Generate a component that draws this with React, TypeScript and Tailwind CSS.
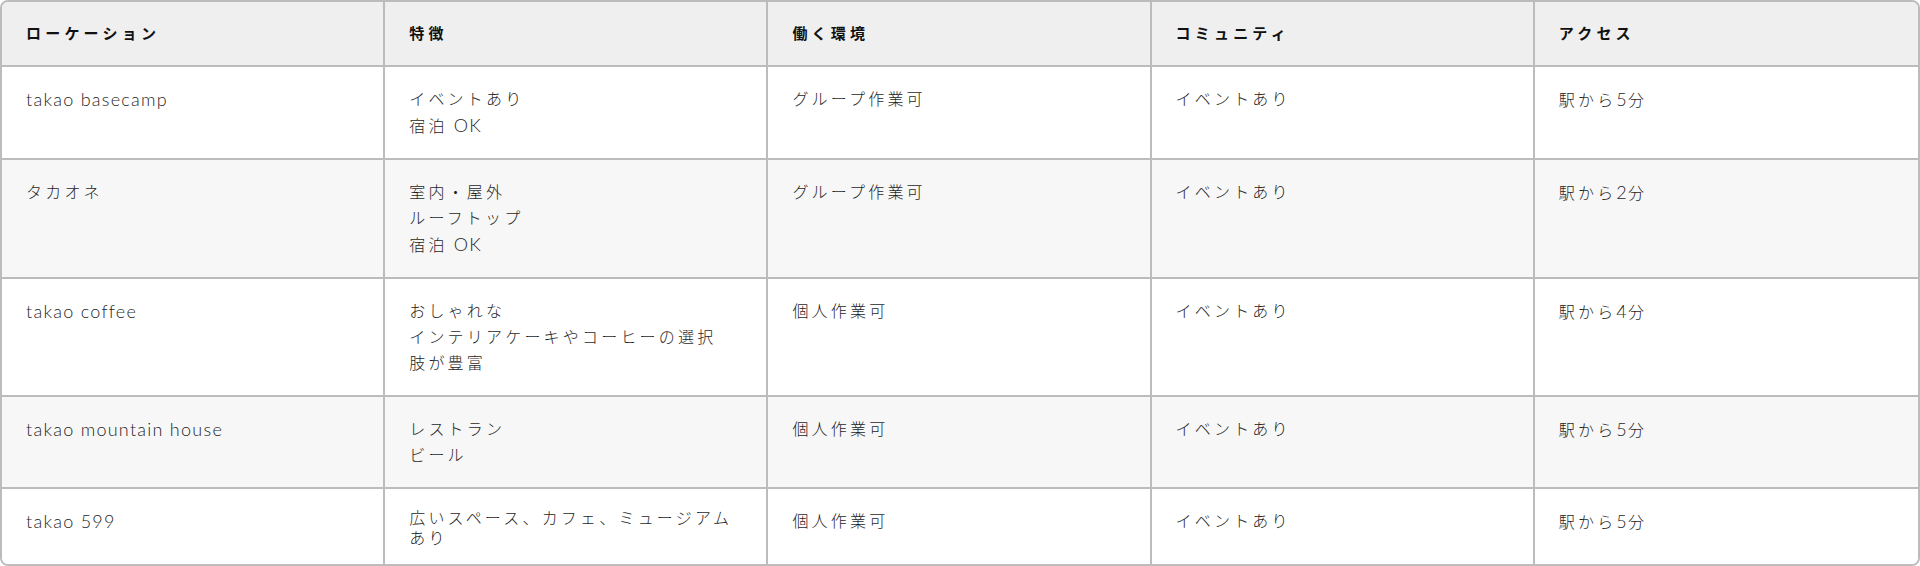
import React from "react"

type Row = {
  location: string
  features: string[]
  work: string
  community: string
  access: string
}

const headers = ["ローケーション", "特徴", "働く環境", "コミュニティ", "アクセス"]

const rows: Row[] = [
  {
    location: "takao basecamp",
    features: ["イベントあり", "宿泊 OK"],
    work: "グループ作業可",
    community: "イベントあり",
    access: "駅から5分",
  },
  {
    location: "タカオネ",
    features: ["室内・屋外", "ルーフトップ", "宿泊 OK"],
    work: "グループ作業可",
    community: "イベントあり",
    access: "駅から2分",
  },
  {
    location: "takao coffee",
    features: ["おしゃれな", "インテリアケーキやコーヒーの選択", "肢が豊富"],
    work: "個人作業可",
    community: "イベントあり",
    access: "駅から4分",
  },
  {
    location: "takao mountain house",
    features: ["レストラン", "ビール"],
    work: "個人作業可",
    community: "イベントあり",
    access: "駅から5分",
  },
  {
    location: "takao 599",
    features: ["広いスペース、カフェ、ミュージアムあり"],
    work: "個人作業可",
    community: "イベントあり",
    access: "駅から5分",
  },
]

// split into latin / japanese runs, they need different sizing
function Text({ value }: { value: string }) {
  const parts = value.match(/[\x20-\x7e]+|[^\x20-\x7e]+/g) ?? []
  return (
    <>
      {parts.map((p, i) =>
        /^[\x20-\x7e]+$/.test(p) ? (
          <span key={i} className="text-[18px] font-light tracking-[0.07em]">
            {p}
          </span>
        ) : (
          <span key={i} className="tracking-[0.2em]">
            {p}
          </span>
        )
      )}
    </>
  )
}

export default function App() {
  return (
    <div
      className="w-[1920px] h-[566px] bg-white text-[#1f1f1f] overflow-hidden"
      style={{ fontFamily: '"Lato", "Noto Sans CJK JP", sans-serif' }}
    >
      <div className="h-full border-2 border-[#bcbcbc] rounded-lg overflow-hidden">
        <table className="w-full table-fixed border-separate border-spacing-0">
          <thead>
            <tr className="bg-[#efefef]">
              {headers.map((h, i) => (
                <th
                  key={h}
                  className={`h-[65px] px-6 text-left align-middle text-[15px] leading-[21px] font-bold tracking-[0.28em] text-[#111] border-b-2 border-[#bcbcbc] ${
                    i < headers.length - 1 ? "border-r-2" : ""
                  }`}
                >
                  {h}
                </th>
              ))}
            </tr>
          </thead>
          <tbody>
            {rows.map((r, ri) => {
              const last = ri === rows.length - 1
              const cell = `px-6 pt-[19px] pb-[19px] align-top text-[16px] leading-[26px] font-light border-[#bcbcbc] ${
                last ? "" : "border-b-2"
              }`
              return (
                <tr key={r.location} className={ri % 2 === 1 ? "bg-[#f7f7f7]" : "bg-white"}>
                  <td className={`${cell} border-r-2`}>
                    <Text value={r.location} />
                  </td>
                  <td className={`${cell} border-r-2`}>
                    {r.features.map((f) => (
                      <div key={f} className={last ? "leading-[19.5px]" : ""}>
                        <Text value={f} />
                      </div>
                    ))}
                  </td>
                  <td className={`${cell} border-r-2`}>
                    <Text value={r.work} />
                  </td>
                  <td className={`${cell} border-r-2`}>
                    <Text value={r.community} />
                  </td>
                  <td className={cell}>
                    <Text value={r.access} />
                  </td>
                </tr>
              )
            })}
          </tbody>
        </table>
      </div>
    </div>
  )
}
